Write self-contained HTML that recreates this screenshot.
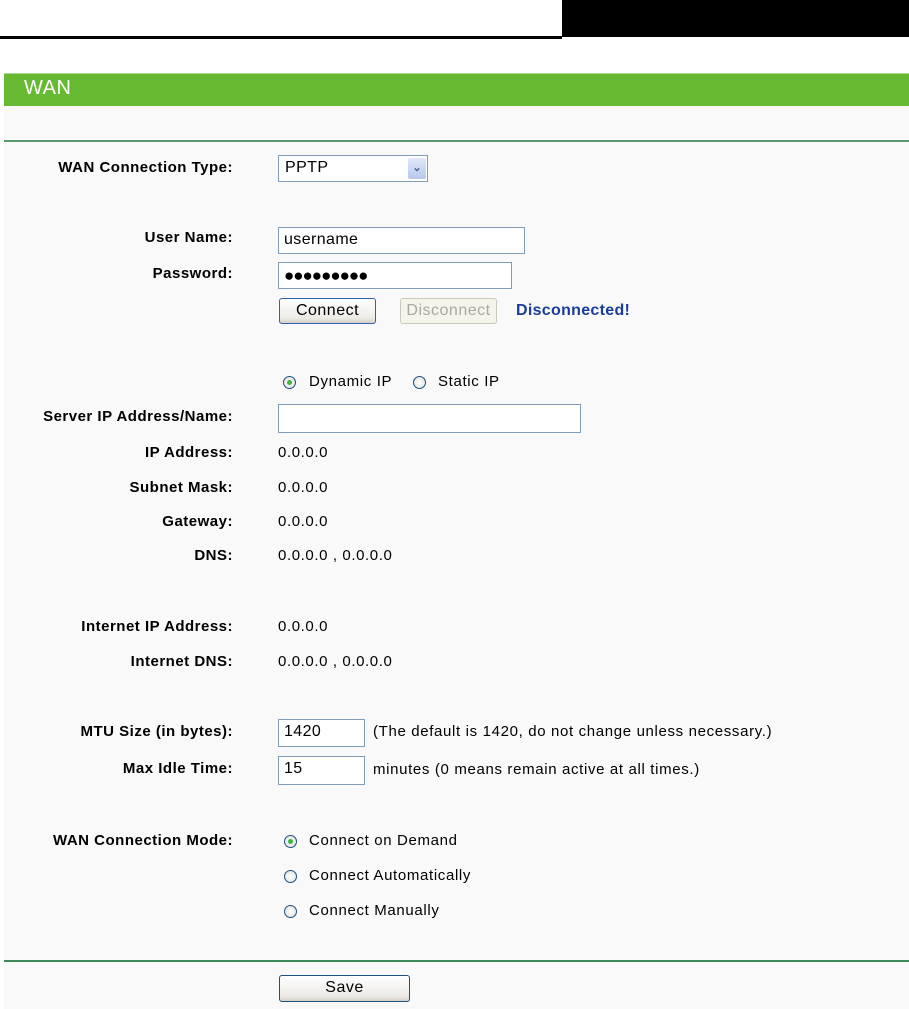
<!DOCTYPE html>
<html><head><meta charset="utf-8"><style>
body{margin:0;width:909px;height:1009px;background:#fff;position:relative;overflow:hidden;font-family:"Liberation Sans",Arial,sans-serif;}
.a{position:absolute}
.lbl{position:absolute;right:676px;font-weight:bold;font-size:15px;color:#000;white-space:nowrap;letter-spacing:0.5px}
.v{position:absolute;left:278px;font-size:15px;letter-spacing:0.6px;color:#000;white-space:nowrap}
.inp{position:absolute;background:#fff;border:1px solid #7f9db9;box-sizing:border-box;font-size:16px;padding-left:5px;line-height:24px;letter-spacing:0.4px}
.btn{position:absolute;box-sizing:border-box;border:1px solid #003c74;border-radius:3px;background:linear-gradient(#fff,#ecebe6 80%,#d6d0c5);font-size:16px;letter-spacing:0.5px;text-align:center;line-height:23px}
.rad{position:absolute;width:13px;height:13px;border:1px solid #1c5180;border-radius:50%;box-sizing:border-box;background:radial-gradient(#fff,#dcdcd6)}
.rad.on::after{content:"";position:absolute;left:3px;top:3px;width:5px;height:5px;border-radius:50%;background:#3fb33f}
.rt{position:absolute;font-size:15px;letter-spacing:0.65px;white-space:nowrap}
</style></head><body>
<div class="a" style="left:562px;top:0;width:347px;height:37px;background:#000"></div>
<div class="a" style="left:0;top:36px;width:562px;height:3px;background:#000"></div>
<div class="a" style="left:4px;top:73px;width:905px;height:33px;background:#67b932;border-top:1px solid #a8d88a"></div>
<div class="a" style="left:24px;top:77px;color:#fff;font-size:20px;letter-spacing:0.5px">WAN</div>
<div class="a" style="left:4px;top:106px;width:905px;height:903px;background:#f9f9f9"></div>
<div class="a" style="left:4px;top:140px;width:905px;height:2px;background:#5a9a6f"></div>

<div class="lbl" style="top:159px">WAN Connection Type:</div>
<div class="inp" style="left:278px;top:155px;width:150px;height:27px;padding-left:6px">PPTP</div>
<div class="a" style="left:408px;top:158px;width:18px;height:21px;background:linear-gradient(#e0e8f8,#b6c8ee);border-radius:2px;color:#4d6185;font-size:11px;text-align:center;line-height:21px;font-weight:bold">&#8964;</div>

<div class="lbl" style="top:229px">User Name:</div>
<div class="inp" style="left:278px;top:227px;width:247px;height:27px">username</div>
<div class="lbl" style="top:265px">Password:</div>
<div class="inp" style="left:278px;top:262px;width:234px;height:27px;font-size:17px;letter-spacing:-1px;line-height:25px">&#9679;&#9679;&#9679;&#9679;&#9679;&#9679;&#9679;&#9679;&#9679;</div>
<div class="btn" style="left:279px;top:298px;width:97px;height:26px;border-color:#3060b0">Connect</div>
<div class="btn" style="left:400px;top:298px;width:97px;height:26px;border-color:#cac8bb;color:#aca899;background:#f5f4ea">Disconnect</div>
<div class="a" style="left:516px;top:302px;font-size:16px;font-weight:bold;letter-spacing:0.3px;color:#1a3d99">Disconnected!</div>

<div class="rad on" style="left:283px;top:376px"></div><div class="rt" style="left:309px;top:373px">Dynamic IP</div>
<div class="rad" style="left:413px;top:376px"></div><div class="rt" style="left:438px;top:373px">Static IP</div>

<div class="lbl" style="top:408px">Server IP Address/Name:</div>
<div class="inp" style="left:278px;top:404px;width:303px;height:29px"></div>
<div class="lbl" style="top:444px">IP Address:</div><div class="v" style="top:444px">0.0.0.0</div>
<div class="lbl" style="top:479px">Subnet Mask:</div><div class="v" style="top:479px">0.0.0.0</div>
<div class="lbl" style="top:513px">Gateway:</div><div class="v" style="top:513px">0.0.0.0</div>
<div class="lbl" style="top:547px">DNS:</div><div class="v" style="top:547px">0.0.0.0 , 0.0.0.0</div>
<div class="lbl" style="top:618px">Internet IP Address:</div><div class="v" style="top:618px">0.0.0.0</div>
<div class="lbl" style="top:653px">Internet DNS:</div><div class="v" style="top:653px">0.0.0.0 , 0.0.0.0</div>

<div class="lbl" style="top:723px">MTU Size (in bytes):</div>
<div class="inp" style="left:278px;top:719px;width:87px;height:28px">1420</div>
<div class="rt" style="left:373px;top:723px">(The default is 1420, do not change unless necessary.)</div>
<div class="lbl" style="top:760px">Max Idle Time:</div>
<div class="inp" style="left:278px;top:756px;width:87px;height:29px">15</div>
<div class="rt" style="left:373px;top:761px">minutes (0 means remain active at all times.)</div>

<div class="lbl" style="top:832px">WAN Connection Mode:</div>
<div class="rad on" style="left:284px;top:835px"></div><div class="rt" style="left:309px;top:832px">Connect on Demand</div>
<div class="rad" style="left:284px;top:870px"></div><div class="rt" style="left:309px;top:867px">Connect Automatically</div>
<div class="rad" style="left:284px;top:905px"></div><div class="rt" style="left:309px;top:902px">Connect Manually</div>

<div class="a" style="left:4px;top:960px;width:905px;height:2px;background:#3c8a5a"></div>
<div class="btn" style="left:279px;top:975px;width:131px;height:27px;border-color:#1c5180">Save</div>
</body></html>
